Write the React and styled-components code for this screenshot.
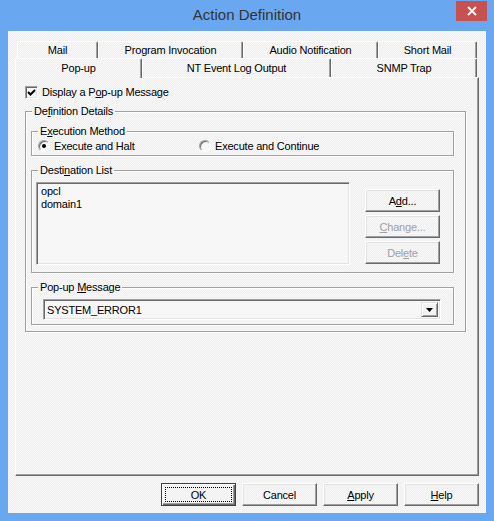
import React from 'react';
import styled, { createGlobalStyle } from 'styled-components';

// classic dialog dither, pinned to the viewport so every layer lines up
const dither = 'repeating-conic-gradient(#efefef 0 25%, #f8f8f8 0 50%) 0 0 / 2px 2px fixed';

const GlobalStyle = createGlobalStyle`
  html, body {
    margin: 0;
    padding: 0;
    background: #69a8f1;
  }
  body {
    font-family: 'Liberation Sans', Arial, sans-serif;
    font-size: 11px;
    letter-spacing: -0.2px;
    color: #000;
  }
`;

const Window = styled.div`
  width: 494px;
  height: 521px;
  background: #69a8f1;
  display: flex;
  flex-direction: column;
`;

const TitleBar = styled.div`
  height: 31px;
  display: grid;
  grid-template-columns: 1fr auto 1fr;
  align-items: start;
  padding: 0 7px;
`;

const Title = styled.div`
  grid-column: 2;
  font-size: 15px;
  letter-spacing: 0;
  line-height: 30px;
  color: #333;
`;

const CloseButton = styled.div`
  grid-column: 3;
  justify-self: end;
  margin-top: 1px;
  width: 31px;
  height: 20px;
  background: #c75050;
  display: flex;
  align-items: center;
  justify-content: center;
`;

const Client = styled.div`
  margin: 0 8px 0 8px;
  height: 482px;
  box-sizing: border-box;
  padding: 10px 7px 7px 7px;
  background: ${dither};
  display: flex;
  flex-direction: column;
`;

const TabControl = styled.div`
  flex: 1;
  display: flex;
  flex-direction: column;
`;

const TabRow = styled.div`
  display: flex;
  align-items: flex-end;
  height: ${p => p.$h}px;
  padding-left: ${p => p.$indent}px;
`;

const Tab = styled.div`
  width: ${p => p.$w}px;
  height: ${p => (p.$active ? p.$h + 1 : p.$h)}px;
  box-sizing: border-box;
  border-top: 1px solid #fff;
  border-left: 1px solid #fff;
  border-right: 1px solid #696969;
  box-shadow: inset -1px 0 #a0a0a0;
  border-radius: 2px 2px 0 0;
  background: ${dither};
  display: flex;
  align-items: center;
  justify-content: center;
  padding-bottom: ${p => (p.$active ? 1 : 0)}px;
  ${p => p.$active && 'position: relative; z-index: 1; margin-bottom: -1px;'}
`;

const Panel = styled.div`
  flex: 1;
  border-top: 1px solid #fff;
  border-left: 1px solid #fff;
  border-right: 1px solid #696969;
  border-bottom: 1px solid #696969;
  box-shadow: inset -1px -1px #a0a0a0;
  padding: 8px 12px 0 9px;
`;

const CheckRow = styled.label`
  display: flex;
  align-items: center;
  gap: 4px;
  height: 13px;
  line-height: 13px;
`;

const CheckBox = styled.span`
  width: 13px;
  height: 13px;
  box-sizing: border-box;
  border: 1px solid;
  border-color: #a0a0a0 #fff #fff #a0a0a0;
  box-shadow: inset 1px 1px #696969, inset -1px -1px #e3e3e3;
  background: #f7f7f7;
  display: flex;
  align-items: center;
  justify-content: center;
`;

const Group = styled.div`
  border: 1px solid #a0a0a0;
  box-shadow: inset 1px 1px #fff, 1px 1px #fff;
  margin-top: ${p => p.$mt}px;
`;

const Legend = styled.div`
  width: fit-content;
  margin: -7px 0 0 6px;
  padding: 0 2px;
  line-height: 13px;
  background: ${dither};
`;

const GroupBody = styled.div`
  padding: ${p => p.$pad};
`;

const RadioRow = styled.div`
  display: flex;
  align-items: center;
  height: 13px;
  margin-top: 1px;
  padding: 0 0 3px 6px;
`;

const RadioLabel = styled.label`
  display: flex;
  align-items: center;
  gap: 4px;
  width: ${p => p.$w || 'auto'};
`;

const Radio = styled.span`
  width: 12px;
  height: 12px;
  box-sizing: border-box;
  border-radius: 50%;
  border: 1px solid;
  border-color: #a0a0a0 #fff #fff #a0a0a0;
  box-shadow: inset 1px 1px #696969;
  background: #f7f7f7;
  display: flex;
  align-items: center;
  justify-content: center;

  &::after {
    content: '';
    width: 4px;
    height: 4px;
    border-radius: 50%;
    background: ${p => (p.$on ? '#000' : 'transparent')};
  }
`;

const ListArea = styled.div`
  display: flex;
  align-items: flex-start;
`;

const Sunken = styled.div`
  box-sizing: border-box;
  border: 1px solid;
  border-color: #a0a0a0 #fff #fff #a0a0a0;
  box-shadow: inset 1px 1px #696969, inset -1px -1px #e3e3e3;
  background: #f7f7f7;
`;

const ListBox = styled(Sunken)`
  flex: 1;
  height: 83px;
  padding: 2px 4px;
  line-height: 13px;
`;

const SideButtons = styled.div`
  display: flex;
  flex-direction: column;
  gap: 3px;
  margin: 7px 0 0 15px;
`;

const Button = styled.button`
  width: 75px;
  height: 23px;
  padding: 0;
  font: inherit;
  letter-spacing: inherit;
  color: ${p => (p.disabled ? '#a0a0a0' : '#000')};
  background: ${dither};
  border: 1px solid;
  border-color: ${p => (p.$default ? '#404040' : '#fff #696969 #696969 #fff')};
  box-shadow: ${p =>
    p.$default
      ? 'inset 1px 1px #fff, inset -1px -1px #696969, inset -2px -2px #a0a0a0'
      : 'inset -1px -1px #a0a0a0, inset 1px 1px #e3e3e3'};
  display: flex;
  align-items: stretch;
  justify-content: center;
  cursor: default;
`;

const ButtonFace = styled.span`
  flex: 1;
  margin: ${p => (p.$focus ? '3px' : '0')};
  border: 1px ${p => (p.$focus ? 'dotted #000' : 'solid transparent')};
  display: flex;
  align-items: center;
  justify-content: center;
`;

const Combo = styled(Sunken)`
  height: 21px;
  margin-top: 5px;
  display: flex;
  align-items: stretch;
  padding: 2px 2px 2px 3px;
`;

const ComboText = styled.div`
  flex: 1;
  display: flex;
  align-items: center;
`;

const ComboArrow = styled.div`
  width: 17px;
  box-sizing: border-box;
  border: 1px solid;
  border-color: #e3e3e3 #696969 #696969 #e3e3e3;
  box-shadow: inset 1px 1px #fff, inset -1px -1px #a0a0a0;
  background: ${dither};
  display: flex;
  align-items: center;
  justify-content: center;
`;

const Footer = styled.div`
  display: flex;
  justify-content: flex-end;
  gap: 6px;
  margin-top: 7px;
`;

const Key = styled.u`
  text-decoration: underline;
  text-underline-offset: 1px;
`;

const rowOne = [
  { label: 'Mail', w: 81 },
  { label: 'Program Invocation', w: 145 },
  { label: 'Audio Notification', w: 135 },
  { label: 'Short Mail', w: 99 },
];

const rowTwo = [
  { label: 'Pop-up', w: 127, active: true },
  { label: 'NT Event Log Output', w: 189 },
  { label: 'SNMP Trap', w: 146 },
];

export default function App() {
  return (
    <>
      <GlobalStyle />
      <Window>
        <TitleBar>
          <Title>Action Definition</Title>
          <CloseButton>
            <svg width="10" height="10" viewBox="0 0 10 10">
              <path d="M1 1 L9 9 M9 1 L1 9" stroke="#fff" strokeWidth="1.8" />
            </svg>
          </CloseButton>
        </TitleBar>

        <Client>
          <TabControl>
            <TabRow $h={17} $indent={2}>
              {rowOne.map(t => (
                <Tab key={t.label} $w={t.w} $h={17}>{t.label}</Tab>
              ))}
            </TabRow>
            <TabRow $h={19} $indent={0}>
              {rowTwo.map(t => (
                <Tab key={t.label} $w={t.w} $h={19} $active={t.active}>{t.label}</Tab>
              ))}
            </TabRow>

            <Panel>
              <CheckRow>
                <CheckBox>
                  <svg width="9" height="9" viewBox="0 0 9 9">
                    <path d="M1 4 L3.5 6.5 L8 2" stroke="#000" strokeWidth="2" fill="none" />
                  </svg>
                </CheckBox>
                <span>Display a P<Key>o</Key>p-up Message</span>
              </CheckRow>

              <Group $mt={12}>
                <Legend>De<Key>f</Key>inition Details</Legend>
                <GroupBody $pad="0 11px 6px 5px">
                  <Group $mt={13}>
                    <Legend>E<Key>x</Key>ecution Method</Legend>
                    <RadioRow>
                      <RadioLabel $w="161px">
                        <Radio $on />
                        <span>Execute and Halt</span>
                      </RadioLabel>
                      <RadioLabel>
                        <Radio />
                        <span>Execute and Continue</span>
                      </RadioLabel>
                    </RadioRow>
                  </Group>

                  <Group $mt={14}>
                    <Legend>Desti<Key>n</Key>ation List</Legend>
                    <GroupBody $pad="5px 13px 7px 4px">
                      <ListArea>
                        <ListBox>
                          <div>opcl</div>
                          <div>domain1</div>
                        </ListBox>
                        <SideButtons>
                          <Button><ButtonFace>A<Key>d</Key>d...</ButtonFace></Button>
                          <Button disabled><ButtonFace><Key>C</Key>hange...</ButtonFace></Button>
                          <Button disabled><ButtonFace>Del<Key>e</Key>te</ButtonFace></Button>
                        </SideButtons>
                      </ListArea>
                    </GroupBody>
                  </Group>

                  <Group $mt={14}>
                    <Legend>Pop-up <Key>M</Key>essage</Legend>
                    <GroupBody $pad="0 12px 4px 11px">
                      <Combo>
                        <ComboText>SYSTEM_ERROR1</ComboText>
                        <ComboArrow>
                          <svg width="7" height="4" viewBox="0 0 7 4">
                            <path d="M0 0 H7 L3.5 4 Z" fill="#000" />
                          </svg>
                        </ComboArrow>
                      </Combo>
                    </GroupBody>
                  </Group>
                </GroupBody>
              </Group>
            </Panel>
          </TabControl>

          <Footer>
            <Button $default><ButtonFace $focus>OK</ButtonFace></Button>
            <Button><ButtonFace>Cancel</ButtonFace></Button>
            <Button><ButtonFace><Key>A</Key>pply</ButtonFace></Button>
            <Button><ButtonFace><Key>H</Key>elp</ButtonFace></Button>
          </Footer>
        </Client>
      </Window>
    </>
  );
}
